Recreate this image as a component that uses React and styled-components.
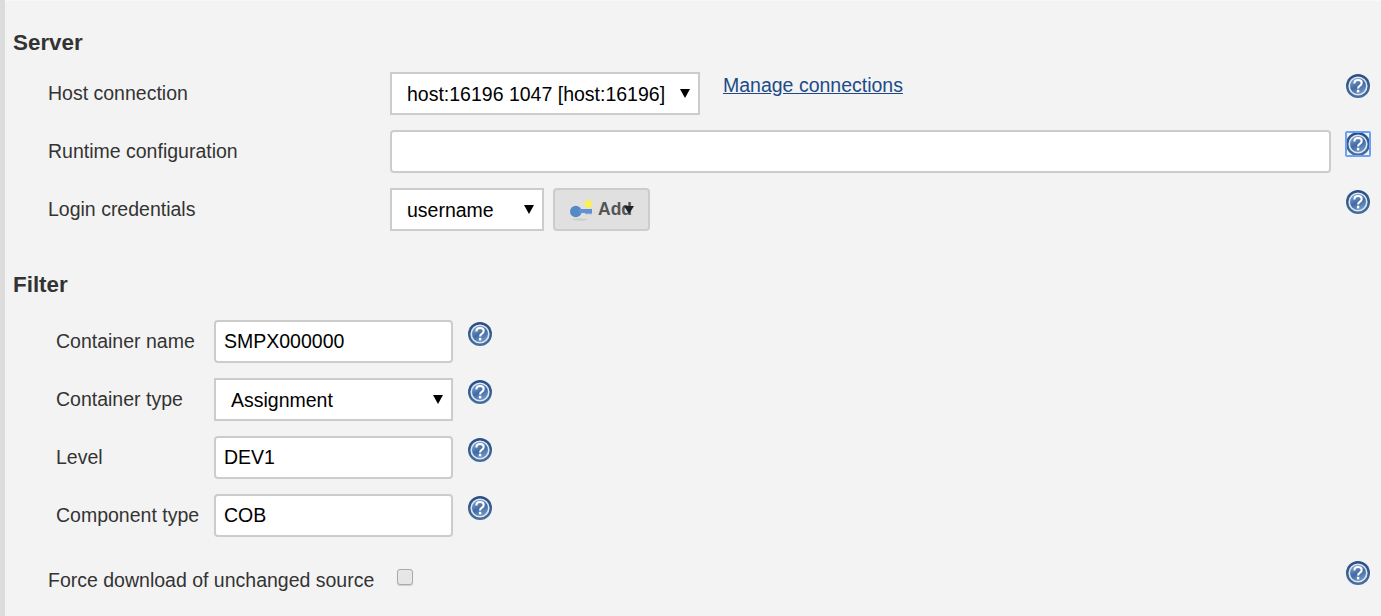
import React from "react";
import styled, { createGlobalStyle } from "styled-components";

const GlobalStyle = createGlobalStyle`
  html, body {
    margin: 0;
    padding: 0;
    height: 616px;
    overflow: hidden;
    background: #f3f3f3;
    font-family: "Liberation Sans", Arial, sans-serif;
  }
`;

const Page = styled.div`
  box-sizing: border-box;
  height: 616px;
  padding-left: 8px;
  border-left: 5px solid #dcdcdc;
  background: #f3f3f3;
  box-shadow: inset 0 1px 0 #f8f8f8;
  color: #333;
`;

const SectionTitle = styled.h2`
  margin: 0;
  height: 24px;
  line-height: 24px;
  font-size: 22.4px;
  font-weight: bold;
  color: #333;
  padding-top: ${(p) => p.$top}px;
  margin-bottom: ${(p) => p.$bottom}px;
`;

const ServerRows = styled.div`
  display: flex;
  flex-direction: column;
  gap: 15px;
  padding-left: 35px;
`;

const ServerRow = styled.div`
  display: grid;
  grid-template-columns: 342px 941px 1fr;
  align-items: start;
  height: 43px;
`;

const Label = styled.label`
  font-size: 19.5px;
  line-height: 43px;
  color: #333;
`;

const Controls = styled.div`
  display: flex;
  align-items: flex-start;
  gap: 9px;
`;

const Help = styled.span`
  box-sizing: border-box;
  display: flex;
  align-items: center;
  justify-content: center;
  width: 26px;
  height: 26px;
  margin-top: 1px;
  margin-left: ${(p) => p.$left || 0}px;
  border-radius: 2px;
  outline: ${(p) => (p.$focused ? "2px solid #6aa0f5" : "none")};
  outline-offset: -2px;
`;

const TextInput = styled.input`
  box-sizing: border-box;
  display: block;
  width: 100%;
  height: 43px;
  padding: 0 8px;
  border: 2px solid #ccc;
  border-radius: 4px;
  background: #fff;
  color: #000;
  font-family: inherit;
  font-size: 19.5px;
  outline: none;
`;

const SelectWrap = styled.div`
  position: relative;
  width: ${(p) => p.$width}px;
  height: 43px;
  flex: none;

  &::after {
    content: "";
    position: absolute;
    right: 10px;
    top: 17px;
    border-left: 5px solid transparent;
    border-right: 5px solid transparent;
    border-top: 9px solid #000;
    pointer-events: none;
  }
`;

const Select = styled.select`
  box-sizing: border-box;
  display: block;
  width: 100%;
  height: 100%;
  padding: 0 0 0 15px;
  border: 2px solid #ccc;
  border-radius: 0;
  background: #fff;
  color: #000;
  font-family: inherit;
  font-size: 19.5px;
  appearance: none;
  outline: none;
`;

const ManageLink = styled.a`
  margin-left: 14px;
  margin-top: 1px;
  font-size: 19.5px;
  line-height: 24px;
  color: #204a87;
  text-decoration: underline;
  cursor: pointer;
`;

const AddButton = styled.button`
  position: relative;
  box-sizing: border-box;
  display: flex;
  align-items: center;
  gap: 4px;
  width: 97px;
  height: 43px;
  padding: 0 0 0 15px;
  border: 2px solid #ccc;
  border-radius: 4px;
  background: #e0e0e0;
  color: #555;
  font-family: inherit;
  font-size: 17.5px;
  font-weight: bold;

  &::after {
    content: "";
    position: absolute;
    left: 69px;
    top: 16px;
    border-left: 5.5px solid transparent;
    border-right: 5.5px solid transparent;
    border-top: 8px solid #222;
  }
`;

const FilterRows = styled.div`
  display: flex;
  flex-direction: column;
  gap: 15px;
  padding-left: 43px;
`;

const FilterRow = styled.div`
  display: grid;
  grid-template-columns: 158px 239px 1fr;
  align-items: start;
  height: 43px;
`;

const ForceRow = styled.div`
  display: flex;
  align-items: center;
  height: 26px;
  margin-top: 30px;
  padding-left: 35px;
`;

const ForceLabel = styled.label`
  font-size: 19.5px;
  color: #333;
  margin-top: 1px;
`;

const Checkbox = styled.span`
  box-sizing: border-box;
  display: block;
  width: 16px;
  height: 16px;
  margin-left: 22.5px;
  margin-top: -6px;
  border: 1px solid #aaa;
  border-radius: 3px;
  background: #e6e6e6;
  box-shadow: 0 1px 1px rgba(0, 0, 0, 0.15);
`;

const ForceHelp = styled(Help)`
  margin-left: auto;
  margin-right: 10px;
  margin-top: -14px;
`;

const HelpIcon = () => (
  <svg width="24" height="24" viewBox="0 0 24 24">
    <defs>
      <linearGradient id="helpFill" x1="0.25" y1="0" x2="0.75" y2="1">
        <stop offset="0" stopColor="#8ea9cf" />
        <stop offset="0.5" stopColor="#3f6ba6" />
        <stop offset="1" stopColor="#7f9fc8" />
      </linearGradient>
      <linearGradient id="helpRim" x1="0" y1="0" x2="0" y2="1">
        <stop offset="0" stopColor="#274e85" />
        <stop offset="1" stopColor="#46709f" />
      </linearGradient>
    </defs>
    <circle cx="12" cy="12" r="12" fill="url(#helpRim)" />
    <circle cx="12" cy="12" r="8.8" fill="url(#helpFill)" stroke="#dfe7f1" strokeWidth="1.6" />
    <path
      d="M8.4 9.4c0-2.1 1.6-3.4 3.7-3.4s3.6 1.3 3.6 3c0 1.4-.8 2.1-2 2.9-1.1.7-1.6 1.2-1.6 2.5"
      fill="none"
      stroke="#fff"
      strokeWidth="2.1"
    />
    <rect x="10.9" y="15.8" width="2.4" height="2.6" fill="#fff" />
  </svg>
);

const KeyIcon = () => (
  <svg width="24" height="24" viewBox="0 0 24 24" style={{ flex: "none" }}>
    <defs>
      <radialGradient id="keyGlow">
        <stop offset="0.6" stopColor="#fdf04f" />
        <stop offset="1" stopColor="#fdf04f" stopOpacity="0.2" />
      </radialGradient>
    </defs>
    <ellipse cx="10" cy="21.5" rx="8" ry="1.2" fill="#cdcdcd" />
    <circle cx="18.5" cy="6" r="4.6" fill="url(#keyGlow)" />
    <circle cx="5.8" cy="13.5" r="5.8" fill="#5488c6" />
    <rect x="9" y="11" width="13" height="4" fill="#5f92cf" />
    <rect x="15" y="15" width="7" height="1.2" fill="#86a8d3" />
  </svg>
);

export default function App() {
  return (
    <Page>
      <GlobalStyle />
      <SectionTitle $top={31} $bottom={17}>Server</SectionTitle>
      <ServerRows>
        <ServerRow>
          <Label>Host connection</Label>
          <Controls>
            <SelectWrap $width={310}>
              <Select defaultValue="host">
                <option value="host">host:16196 1047 [host:16196]</option>
              </Select>
            </SelectWrap>
            <ManageLink>Manage connections</ManageLink>
          </Controls>
          <Help $left={14}><HelpIcon /></Help>
        </ServerRow>
        <ServerRow>
          <Label>Runtime configuration</Label>
          <TextInput />
          <Help $left={14} $focused><HelpIcon /></Help>
        </ServerRow>
        <ServerRow>
          <Label>Login credentials</Label>
          <Controls>
            <SelectWrap $width={154}>
              <Select defaultValue="username">
                <option value="username">username</option>
              </Select>
            </SelectWrap>
            <AddButton type="button"><KeyIcon />Add</AddButton>
          </Controls>
          <Help $left={14}><HelpIcon /></Help>
        </ServerRow>
      </ServerRows>

      <SectionTitle $top={42} $bottom={23}>Filter</SectionTitle>
      <FilterRows>
        <FilterRow>
          <Label>Container name</Label>
          <TextInput defaultValue="SMPX000000" />
          <Help $left={14}><HelpIcon /></Help>
        </FilterRow>
        <FilterRow>
          <Label>Container type</Label>
          <SelectWrap $width={239}>
            <Select defaultValue="assignment">
              <option value="assignment">Assignment</option>
            </Select>
          </SelectWrap>
          <Help $left={14}><HelpIcon /></Help>
        </FilterRow>
        <FilterRow>
          <Label>Level</Label>
          <TextInput defaultValue="DEV1" />
          <Help $left={14}><HelpIcon /></Help>
        </FilterRow>
        <FilterRow>
          <Label>Component type</Label>
          <TextInput defaultValue="COB" />
          <Help $left={14}><HelpIcon /></Help>
        </FilterRow>
      </FilterRows>

      <ForceRow>
        <ForceLabel>Force download of unchanged source</ForceLabel>
        <Checkbox />
        <ForceHelp><HelpIcon /></ForceHelp>
      </ForceRow>
    </Page>
  );
}
